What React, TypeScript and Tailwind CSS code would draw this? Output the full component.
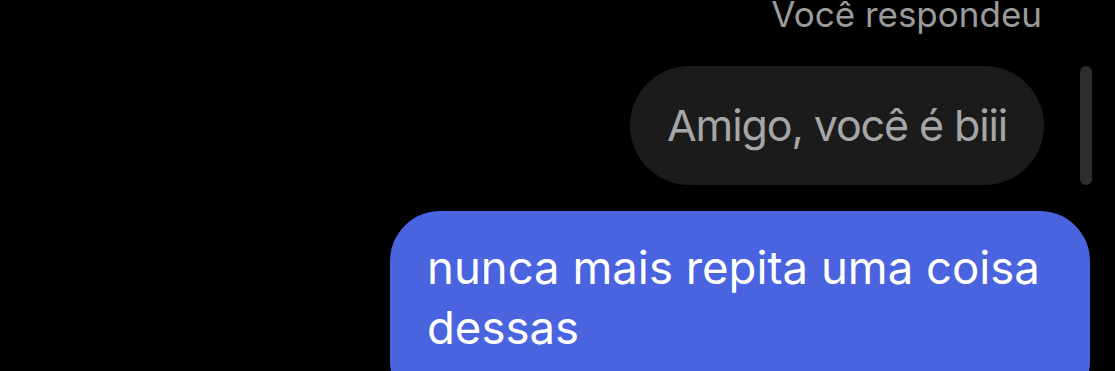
export default function App() {
  return (
    <div
      className="w-[1115px] h-[371px] overflow-hidden bg-black flex flex-col"
      style={{ fontFamily: 'Inter, "Noto Sans", sans-serif' }}
    >
      <div className="flex justify-end pr-[73px] -mt-[7px] h-[44px]">
        <span className="text-[35px] leading-[42px] text-[#9b9b9b]">Você respondeu</span>
      </div>

      <div className="flex justify-end items-stretch pr-[23px] mt-[31px]">
        <div className="h-[119px] w-[414px] rounded-full bg-[#1b1b1b] flex items-center pl-[37px]">
          <span className="text-[43px] tracking-[-1.1px] text-[#a6a6a6]">Amigo, você é biii</span>
        </div>
        <div className="ml-[36px] w-[12px] rounded-full bg-[#2e2e2e]" />
      </div>

      <div className="flex justify-end pr-[25px] mt-[26px]">
        <div className="w-[700px] h-[200px] rounded-[50px] bg-[#4a64e0] pl-[37px] pr-[30px] pt-[27px]">
          <p className="text-[45.5px] leading-[60px] text-white">
            nunca mais repita uma coisa dessas
          </p>
        </div>
      </div>
    </div>
  );
}
